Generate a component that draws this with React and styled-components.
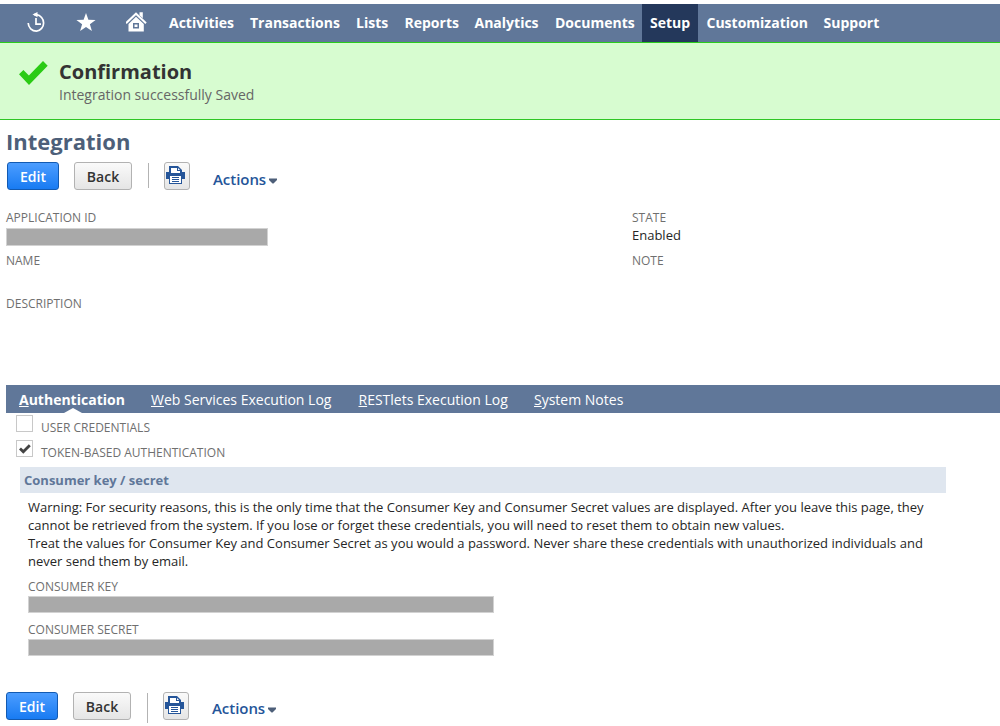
import React from 'react';
import styled, { createGlobalStyle } from 'styled-components';

const Global = createGlobalStyle`
  * { box-sizing: border-box; }
  body { margin: 0; background: #fff; font-family: "Open Sans", sans-serif; color: #262626; overflow: hidden; }
`;
const Page = styled.div`width: 1000px; height: 726px; padding-top: 4px; overflow: hidden;`;

const NavBar = styled.nav`display: flex; height: 38px; background: #607799; padding-left: 26px;`;
const NavIcons = styled.div`display: flex; width: 135px; svg { display: block; }`;
const NavItem = styled.a`
  width: ${p => p.$w}px; padding-left: 8px; line-height: 38px; white-space: nowrap;
  font-size: 14px; font-weight: 700; color: #fff;
  background: ${p => (p.$active ? '#24385b' : 'transparent')};
  margin-right: ${p => (p.$active ? 0.5 : 0)}px;
`;

const Banner = styled.section`
  display: flex; height: 78px; background: #d7fcd0;
  border-top: 1px solid #2acb1c; border-bottom: 1px solid #2fc625; padding: 17px 0 0 19px;
`;
const BannerText = styled.div`padding-left: 11px;`;
const BannerTitle = styled.h2`
  margin: 0; font-size: 20px; font-weight: 700; line-height: 24px; color: #333;
`;
const BannerMessage = styled.p`margin: 0; font-size: 14px; line-height: 22px; color: #666;`;

const Title = styled.h1`
  margin: 0; height: 42px; padding: 6px 0 0 6px; font-size: 22px; line-height: 30px; font-weight: 700; color: #4d5f79;
`;
const Toolbar = styled.div`display: flex; padding-left: ${p => p.$left}px; height: 28px;`;
const Button = styled.button`
  width: ${p => p.$w}px; height: 28px; padding: ${p => (p.$icon ? 0 : 2)}px 0 0; border-radius: 3px; font: 600 14px/24px "Open Sans", sans-serif;
  border: 1px solid ${p => (p.$primary ? '#125ab2' : '#b2b2b2')};
  color: ${p => (p.$primary ? '#fff' : '#333')};
  background: ${p => (p.$primary ? 'linear-gradient(#4c9dff, #187bf2)' : 'linear-gradient(#fafafa, #e5e5e5)')};
  margin-right: ${p => p.$gap || 0}px;
  display: flex; justify-content: ${p => (p.$icon ? 'flex-start' : 'center')}; align-items: center;
  svg { margin-bottom: 2px; }
`;
const Divider = styled.span`width: 1px; height: ${p => p.$h}px; margin: 1px 15px 0 0; background: #b3b3b3;`;
const Actions = styled.a`
  display: flex; margin: ${p => p.$top}px 0 0 23px; height: 20px; font-size: 15px; line-height: 20px; font-weight: 600; color: #255599;
  letter-spacing: -0.05px;
  svg { margin: 9px 0 0 3px; }
`;

const Fields = styled.div`display: grid; grid-template-columns: 626px 1fr; padding: 19px 0 0 6px; height: 195px;`;
const Column = styled.div`display: flex; flex-direction: column;`;
const Field = styled.div`height: 43px;`;
const Label = styled.div`font-size: 12px; line-height: 18px; color: #6f6f6f; white-space: nowrap;`;
const Value = styled.div`font-size: 13px; line-height: 17px; color: #262626;`;
const Redacted = styled.div`
  width: ${p => p.$w}px; height: ${p => p.$h}px; margin-top: ${p => p.$top || 0}px; background: #a9a9a9; border: 1px solid #d2d2d2;
`;

const Tabs = styled.div`display: flex; height: 28px; margin-left: 6px; padding-left: 13px; background: #607799;`;
const Tab = styled.a`
  position: relative; width: ${p => p.$w}px; font-size: 14px; line-height: 29px; color: #fff; white-space: nowrap;
  font-weight: ${p => (p.$active ? 700 : 400)};
  u { text-underline-offset: 1px; text-decoration-thickness: 1px; }
`;
const Notch = styled.span`
  position: absolute; left: 45px; bottom: 0; border: solid transparent; border-width: 0 9px 5px; border-bottom-color: #fff;
`;
const CheckRow = styled.div`display: flex; height: 25px; padding: 2px 0 0 16px;`;
const Box = styled.span`
  width: 17px; height: 17px; border: 1px solid #c8c8c8; background: #fff; margin-right: 8px; svg { display: block; }
`;
const CheckLabel = styled(Label)`padding-top: 4px;`;
const SectionHead = styled.h3`
  margin: 4px 0 0 20px; width: 926px; height: 26px; padding-left: 4px; background: #dfe6ef;
  font-size: 13px; line-height: 26px; font-weight: 700; color: #607799;
`;
const SectionBody = styled.div`padding: 5px 0 0 28px; height: 199px;`;
const Warning = styled.p`margin: 0 0 8px; font-size: 13px; line-height: 18px; white-space: nowrap;`;

const ClockIcon = () => (
  <svg width="50" height="38" viewBox="-0.5 4 50 38" fill="none" stroke="#fff">
    <path d="M1.700 23A8.400 8.400 0 0 0 10 31.200A8.400 8.400 0 0 0 10 14.600H7.500" strokeWidth="1.700" />
    <path d="M9.500 18v6.200h5" strokeWidth="1.700" />
    <path d="M6 14.600l5-2.600v5.300z" fill="#fff" stroke="none" />
  </svg>
);
const StarIcon = () => (
  <svg width="50" height="38" viewBox="0 4 50 38">
    <path fill="#fff" d="M10 13l2.400 6.700 7.200.2-5.700 4.300 2 6.900-5.900-4-5.900 4 2-6.900-5.700-4.300 7.200-.2z" />
  </svg>
);
const HomeIcon = () => (
  <svg width="35" height="38" viewBox="-1 4 35 38">
    <path d="M-1 23.200L9 13.700l10 9.500" fill="none" stroke="#fff" strokeWidth="2" />
    <path fill="#fff" d="M12.500 12.200h3.300v6l-3.300-3zM9 16.800l7.800 7.300V31.500H1.500v-7.400z" />
    <path fill="#607799" d="M6 23h6v5.500H6z" />
    <path fill="#fff" d="M7.500 24.500h3v2.500h-3z" />
  </svg>
);
const SuccessIcon = () => (
  <svg width="29" height="26" viewBox="0 0 29 26">
    <path fill="#2acb14" d="M0 14.300l4.400-4.300 5.500 5.500L24 1l4.700 4.700L10 25z" />
  </svg>
);
const CheckIcon = () => (
  <svg width="15" height="15" viewBox="0 0 15 15">
    <path d="M3 7.500l3.300 3.300 6.500-6.500" fill="none" stroke="#444" strokeWidth="2.800" />
  </svg>
);
const PrinterIcon = () => (
  <svg width="21" height="20" viewBox="0 0 21 20">
    <path fill="#255599" d="M4 1h9l4 4v2h3v7h-3v5H4v-5H1V7h3z" />
    <path fill="#fff" d="M6 3h6v3h3v2H6zM13 3l2 2h-2zM5 11h11v7H5z" />
    <path fill="#255599" d="M7 12h7v1H7zM7 14h7v1H7zM7 16h7v1H7z" />
  </svg>
);

const NAV = [
  ['Activities', 81], ['Transactions', 106], ['Lists', 48.500], ['Reports', 70], ['Analytics', 80.500],
  ['Documents', 95], ['Setup', 56, true], ['Customization', 117], ['Support', 80],
];
const TABS = [
  ['Authentication', 132, true], ['Web Services Execution Log', 207.500], ['RESTlets Execution Log', 175.500], ['System Notes', 120],
];

function PageActions({ left, dividerHeight, actionsTop }) {
  return (
    <Toolbar $left={left}>
      <Button $primary $w={52} $gap={15}>Edit</Button>
      <Button $w={58} $gap={16}>Back</Button>
      <Divider $h={dividerHeight} />
      <Button $w={26} $icon aria-label="Print"><PrinterIcon /></Button>
      <Actions $top={actionsTop}>
        Actions
        <svg width="8" height="6" viewBox="0 0 8 6"><path fill="#4d5f79" d="M0 .5h8v1.500L4.500 5.500h-1L0 2z" /></svg>
      </Actions>
    </Toolbar>
  );
}

export default function App() {
  return (
    <Page>
      <Global />
      <NavBar>
        <NavIcons><ClockIcon /><StarIcon /><HomeIcon /></NavIcons>
        {NAV.map(([name, w, active]) => <NavItem key={name} $w={w} $active={active}>{name}</NavItem>)}
      </NavBar>
      <Banner>
        <SuccessIcon />
        <BannerText>
          <BannerTitle>Confirmation</BannerTitle>
          <BannerMessage>Integration successfully Saved</BannerMessage>
        </BannerText>
      </Banner>
      <Title>Integration</Title>
      <PageActions left={7} dividerHeight={25} actionsTop={7} />
      <Fields>
        <Column>
          <Field><Label>APPLICATION ID</Label><Redacted $w={262} $h={18} $top={1} /></Field>
          <Field><Label>NAME</Label></Field>
          <Field><Label>DESCRIPTION</Label></Field>
        </Column>
        <Column>
          <Field><Label>STATE</Label><Value>Enabled</Value></Field>
          <Field><Label>NOTE</Label></Field>
        </Column>
      </Fields>
      <Tabs>
        {TABS.map(([name, w, active]) => (
          <Tab key={name} $w={w} $active={active}>
            <u>{name[0]}</u>{name.slice(1)}
            {active && <Notch />}
          </Tab>
        ))}
      </Tabs>
      <CheckRow><Box /><CheckLabel>USER CREDENTIALS</CheckLabel></CheckRow>
      <CheckRow><Box><CheckIcon /></Box><CheckLabel>TOKEN-BASED AUTHENTICATION</CheckLabel></CheckRow>
      <SectionHead>Consumer key / secret</SectionHead>
      <SectionBody>
        <Warning>
          Warning: For security reasons, this is the only time that the Consumer Key and Consumer Secret values are displayed. After you leave this page, they<br />
          cannot be retrieved from the system. If you lose or forget these credentials, you will need to reset them to obtain new values.<br />
          Treat the values for Consumer Key and Consumer Secret as you would a password. Never share these credentials with unauthorized individuals and<br />
          never send them by email.
        </Warning>
        <Field><Label>CONSUMER KEY</Label><Redacted $w={466} $h={17} /></Field>
        <Field><Label>CONSUMER SECRET</Label><Redacted $w={466} $h={17} /></Field>
      </SectionBody>
      <PageActions left={6} dividerHeight={30} actionsTop={6} />
    </Page>
  );
}
